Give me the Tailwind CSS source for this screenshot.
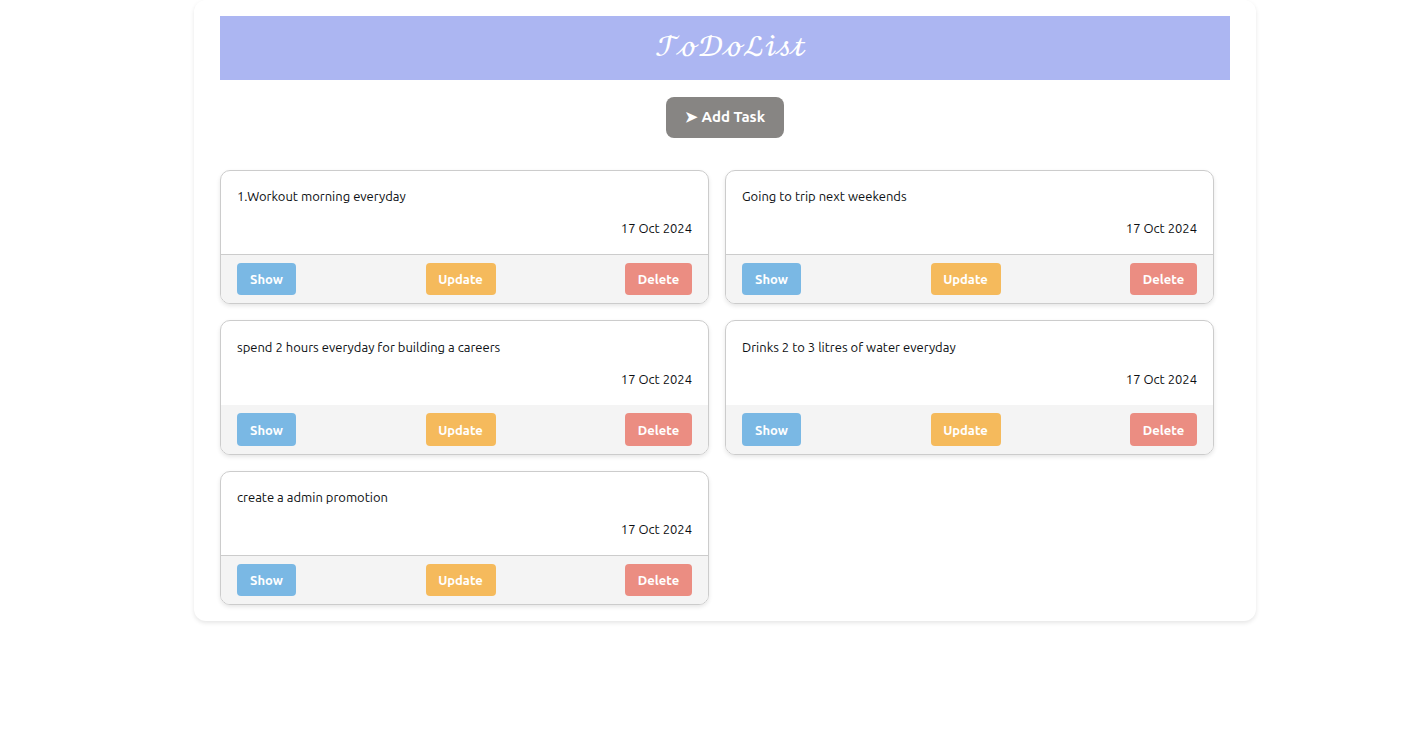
<!DOCTYPE html>
<html lang="en">
<head>
<meta charset="utf-8">
<meta name="viewport" content="width=device-width, initial-scale=1">
<title>ToDoList</title>
<script src="https://cdn.jsdelivr.net/npm/@tailwindcss/browser@4"></script>
</head>
<body class="min-h-screen bg-white pl-6 font-['Ubuntu','Noto_Sans',sans-serif] text-[13px] leading-6 text-[#0c0f12]">
<main class="mx-auto max-w-[1062px] rounded-xl bg-white px-[26px] py-4 shadow-[0_2px_4px_rgba(0,0,0,0.1)]">
  <header class="flex h-16 items-center justify-center bg-[#acb6f2] text-white">
    <h1 class="pl-3 text-[30px] leading-10 font-['STIX_Two_Math','DejaVu_Math_TeX_Gyre',serif]" aria-label="ToDoList">𝒯ℴ𝒟ℴℒ𝒾𝓈𝓉</h1>
  </header>
  <div class="flex justify-center pt-[17px] pb-8">
    <button type="button" class="h-[41px] w-[118px] rounded-lg bg-[#878583] pb-[2px] text-[15px] font-bold text-white">➤ Add Task</button>
  </div>
  <section class="mr-4 grid grid-cols-1 gap-4 md:grid-cols-2" aria-label="Tasks">
    <article class="overflow-hidden rounded-[10px] border border-[#ccc] shadow-[0_2px_4px_rgba(0,0,0,0.1)]">
      <div class="flex flex-col gap-2 px-4 pt-[13px] pb-[14px]"><p>1.Workout morning everyday</p><time class="text-right" datetime="2024-10-17">17 Oct 2024</time></div>
      <div class="flex justify-between border-t border-[#ccc] bg-[#f4f4f4] px-4 py-2">
        <button type="button" class="h-8 w-[59px] rounded bg-[#7ab8e4] font-bold text-white">Show</button>
        <button type="button" class="h-8 w-[70px] rounded bg-[#f5ba5c] font-bold text-white">Update</button>
        <button type="button" class="h-8 w-[67px] rounded bg-[#eb8d82] font-bold text-white">Delete</button>
      </div>
    </article>
    <article class="overflow-hidden rounded-[10px] border border-[#ccc] shadow-[0_2px_4px_rgba(0,0,0,0.1)]">
      <div class="flex flex-col gap-2 px-4 pt-[13px] pb-[14px]"><p>Going to trip next weekends</p><time class="text-right" datetime="2024-10-17">17 Oct 2024</time></div>
      <div class="flex justify-between border-t border-[#ccc] bg-[#f4f4f4] px-4 py-2">
        <button type="button" class="h-8 w-[59px] rounded bg-[#7ab8e4] font-bold text-white">Show</button>
        <button type="button" class="h-8 w-[70px] rounded bg-[#f5ba5c] font-bold text-white">Update</button>
        <button type="button" class="h-8 w-[67px] rounded bg-[#eb8d82] font-bold text-white">Delete</button>
      </div>
    </article>
    <article class="overflow-hidden rounded-[10px] border border-[#ccc] shadow-[0_2px_4px_rgba(0,0,0,0.1)]">
      <div class="flex flex-col gap-2 px-4 py-[14px]"><p>spend 2 hours everyday for building a careers</p><time class="text-right" datetime="2024-10-17">17 Oct 2024</time></div>
      <div class="flex justify-between bg-[#f4f4f4] px-4 py-2">
        <button type="button" class="h-[33px] w-[59px] rounded bg-[#7ab8e4] font-bold text-white">Show</button>
        <button type="button" class="h-[33px] w-[70px] rounded bg-[#f5ba5c] font-bold text-white">Update</button>
        <button type="button" class="h-[33px] w-[67px] rounded bg-[#eb8d82] font-bold text-white">Delete</button>
      </div>
    </article>
    <article class="overflow-hidden rounded-[10px] border border-[#ccc] shadow-[0_2px_4px_rgba(0,0,0,0.1)]">
      <div class="flex flex-col gap-2 px-4 py-[14px]"><p>Drinks 2 to 3 litres of water everyday</p><time class="text-right" datetime="2024-10-17">17 Oct 2024</time></div>
      <div class="flex justify-between bg-[#f4f4f4] px-4 py-2">
        <button type="button" class="h-[33px] w-[59px] rounded bg-[#7ab8e4] font-bold text-white">Show</button>
        <button type="button" class="h-[33px] w-[70px] rounded bg-[#f5ba5c] font-bold text-white">Update</button>
        <button type="button" class="h-[33px] w-[67px] rounded bg-[#eb8d82] font-bold text-white">Delete</button>
      </div>
    </article>
    <article class="overflow-hidden rounded-[10px] border border-[#ccc] shadow-[0_2px_4px_rgba(0,0,0,0.1)]">
      <div class="flex flex-col gap-2 px-4 pt-[13px] pb-[14px]"><p>create a admin promotion</p><time class="text-right" datetime="2024-10-17">17 Oct 2024</time></div>
      <div class="flex justify-between border-t border-[#ccc] bg-[#f4f4f4] px-4 py-2">
        <button type="button" class="h-8 w-[59px] rounded bg-[#7ab8e4] font-bold text-white">Show</button>
        <button type="button" class="h-8 w-[70px] rounded bg-[#f5ba5c] font-bold text-white">Update</button>
        <button type="button" class="h-8 w-[67px] rounded bg-[#eb8d82] font-bold text-white">Delete</button>
      </div>
    </article>
  </section>
</main>
</body>
</html>
